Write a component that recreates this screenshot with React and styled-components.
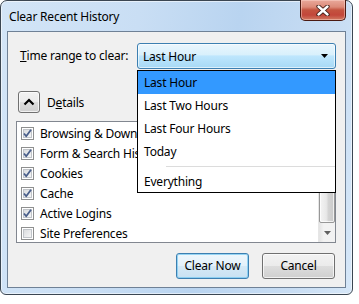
import React from "react";
import styled, { createGlobalStyle } from "styled-components";

const Global = createGlobalStyle`
  html, body { margin: 0; padding: 0; background: #ffffff; }
  body { font-family: "Noto Sans", "Open Sans", sans-serif; font-size: 12px; letter-spacing: -0.2px; color: #000; }
  * { box-sizing: border-box; }
`;

const Window = styled.div`
  width: 353px;
  height: 295px;
  border: 1px solid #3b4652;
  border-radius: 7px 7px 6px 6px;
  background: linear-gradient(100deg, #d3e5f7 0%, #c9def4 35%, #b9d4f0 60%, #c8ddf3 85%, #d6e7f8 100%);
  padding: 0 6px 6px 6px;
  display: flex;
  flex-direction: column;
  box-shadow: inset 0 0 0 1px rgba(255,255,255,0.55);
`;

const TitleBar = styled.div`
  height: 30px;
  display: flex;
  align-items: flex-start;
  justify-content: space-between;
`;

const Title = styled.div`
  margin-top: 8px;
  padding-left: 2px;
  font-size: 12px;
  line-height: 16px;
  color: #000;
`;

const CloseButton = styled.div`
  width: 46px;
  height: 21px;
  margin-top: -1px;
  border: 1px solid #4a1a12;
  border-top: none;
  border-radius: 0 0 5px 5px;
  background: linear-gradient(180deg, #e9a99b 0%, #dc8a79 35%, #c4533f 50%, #c2463a 75%, #d17a62 100%);
  display: flex;
  align-items: center;
  justify-content: center;
  box-shadow: inset 0 0 0 1px rgba(255,220,210,0.45);
`;

const Client = styled.div`
  flex: 1;
  border: 1px solid #6f8196;
  background: #f0f0f0;
  padding: 11px 9px 8px 8px;
  display: flex;
  flex-direction: column;
`;

const RangeRow = styled.div`
  display: flex;
  align-items: center;
  height: 26px;
`;

const Label = styled.div`
  flex: 1;
  padding-left: 4px;
  line-height: 16px;
`;

const SelectWrap = styled.div`
  position: relative;
  width: 199px;
  height: 26px;
`;

const SelectBox = styled.div`
  height: 100%;
  border: 1px solid #3c7fb1;
  border-radius: 3px;
  background: linear-gradient(180deg, #eaf6fd 0%, #d9f0fc 45%, #bee6fd 50%, #a7d9f5 100%);
  display: flex;
  align-items: center;
  justify-content: space-between;
  padding: 0 7px 0 5px;
  box-shadow: inset 0 0 0 1px rgba(255,255,255,0.6);
`;

const Popup = styled.div`
  position: absolute;
  left: 0;
  right: 0;
  top: calc(100% + 1px);
  background: #fff;
  border: 1px solid #000;
  z-index: 5;
  display: flex;
  flex-direction: column;
`;

const Option = styled.div`
  height: ${p => (p.$last ? 22 : 23)}px;
  display: flex;
  align-items: center;
  padding-left: 6px;
  background: ${p => (p.$active ? "#3399ff" : "transparent")};
  color: #000;
`;

const Separator = styled.div`
  height: 7px;
  display: flex;
  align-items: center;
  padding-left: 28px;
  &::after {
    content: "";
    flex: 1;
    height: 1px;
    background: #dcdcdc;
  }
`;

const DetailsRow = styled.div`
  margin-top: 22px;
  height: 22px;
  display: flex;
  align-items: center;
  gap: 7px;
  padding-left: 2px;
`;

const SquareButton = styled.div`
  width: 22px;
  height: 22px;
  border: 1px solid #707070;
  border-radius: 3px;
  background: linear-gradient(180deg, #f2f2f2 0%, #ebebeb 50%, #dddddd 51%, #cfcfcf 100%);
  box-shadow: inset 0 0 0 1px rgba(255,255,255,0.7);
  display: flex;
  align-items: center;
  justify-content: center;
`;

const ListBox = styled.div`
  margin-top: 8px;
  height: 122px;
  width: 320px;
  border: 1px solid #828790;
  background: #fff;
  display: flex;
  overflow: hidden;
`;

const Items = styled.div`
  flex: 1;
  padding-top: 1px;
  display: flex;
  flex-direction: column;
  overflow: hidden;
`;

const Item = styled.div`
  height: 20px;
  flex-shrink: 0;
  display: flex;
  align-items: center;
  padding-left: 4px;
  gap: 6px;
  white-space: nowrap;
`;

const ScrollBar = styled.div`
  width: 17px;
  display: flex;
  flex-direction: column;
  background: linear-gradient(90deg, #e3e3e3 0%, #f2f2f2 30%, #f2f2f2 100%);
  border-left: 1px solid #e6e6e6;
`;

const ScrollArrow = styled.div`
  height: 18px;
  display: flex;
  align-items: center;
  justify-content: center;
`;

const Track = styled.div`
  flex: 1;
  padding: 0 0 1px 0;
  display: flex;
`;

const Thumb = styled.div`
  flex: 1;
  border: 1px solid #979797;
  border-radius: 2px;
  background: linear-gradient(90deg, #f4f4f4 0%, #e8e8e8 45%, #d4d4d4 60%, #c9c9c9 100%);
  box-shadow: inset 0 0 0 1px rgba(255,255,255,0.7);
`;

const ButtonRow = styled.div`
  margin-top: 10px;
  display: flex;
  justify-content: flex-end;
  gap: 13px;
  padding-right: 1px;
`;

const PushButton = styled.div`
  width: 73px;
  height: 26px;
  border: 1px solid ${p => (p.$default ? "#3c7fb1" : "#707070")};
  border-radius: 3px;
  background: ${p =>
    p.$default
      ? "linear-gradient(180deg, #eef7fc 0%, #e3f1fa 50%, #d5e9f6 51%, #c9e1f2 100%)"
      : "linear-gradient(180deg, #f2f2f2 0%, #ebebeb 50%, #dddddd 51%, #cfcfcf 100%)"};
  box-shadow: inset 0 0 0 1px ${p => (p.$default ? "rgba(120,200,240,0.75)" : "rgba(255,255,255,0.7)")};
  display: flex;
  align-items: center;
  justify-content: center;
  line-height: 16px;
`;

const Check = ({ checked }) => (
  <svg width="13" height="13" viewBox="0 0 13 13" style={{ flexShrink: 0 }}>
    <defs>
      <linearGradient id="cbg" x1="0" y1="0" x2="1" y2="1">
        <stop offset="0" stopColor="#d8dadd" />
        <stop offset="1" stopColor="#f7f7f7" />
      </linearGradient>
    </defs>
    <rect x="0.5" y="0.5" width="12" height="12" fill="#fff" stroke="#8e8f8f" />
    <rect x="2.5" y="2.5" width="8" height="8" fill="url(#cbg)" stroke="#c0c4c9" />
    {checked && (
      <path d="M3 6.5 L5.2 9.2 L10 2.8" fill="none" stroke="#4a5f8a" strokeWidth="1.8" strokeLinejoin="round" />
    )}
  </svg>
);

const items = [
  ["Browsing & Download History", true],
  ["Form & Search History", true],
  ["Cookies", true],
  ["Cache", true],
  ["Active Logins", true],
  ["Site Preferences", false],
];

export default function App() {
  return (
    <>
      <Global />
      <Window>
        <TitleBar>
          <Title>Clear Recent History</Title>
          <CloseButton>
            <svg width="14" height="11" viewBox="0 0 14 11">
              <path d="M2.5 1.5 L11.5 9.5 M11.5 1.5 L2.5 9.5" stroke="#3a1a14" strokeWidth="4.2" strokeLinecap="round" />
              <path d="M2.5 1.5 L11.5 9.5 M11.5 1.5 L2.5 9.5" stroke="#ffffff" strokeWidth="2.4" strokeLinecap="round" />
            </svg>
          </CloseButton>
        </TitleBar>
        <Client>
          <RangeRow>
            <Label>
              <u>T</u>ime range to clear:
            </Label>
            <SelectWrap>
              <SelectBox>
                <span>Last Hour</span>
                <svg width="7" height="4" viewBox="0 0 7 4">
                  <path d="M0 0 H7 L3.5 4 Z" fill="#000" />
                </svg>
              </SelectBox>
              <Popup>
                <Option $active>Last Hour</Option>
                <Option>Last Two Hours</Option>
                <Option>Last Four Hours</Option>
                <Option>Today</Option>
                <Separator />
                <Option $last>Everything</Option>
              </Popup>
            </SelectWrap>
          </RangeRow>
          <DetailsRow>
            <SquareButton>
              <svg width="12" height="8" viewBox="0 0 12 8">
                <path d="M1.5 6.5 L6 2 L10.5 6.5" fill="none" stroke="#000" strokeWidth="2.2" />
              </svg>
            </SquareButton>
            <span>
              D<u>e</u>tails
            </span>
          </DetailsRow>
          <ListBox>
            <Items>
              {items.map(([label, checked]) => (
                <Item key={label}>
                  <Check checked={checked} />
                  <span>{label}</span>
                </Item>
              ))}
            </Items>
            <ScrollBar>
              <ScrollArrow>
                <svg width="7" height="4" viewBox="0 0 7 4">
                  <path d="M0 4 H7 L3.5 0 Z" fill="#606060" />
                </svg>
              </ScrollArrow>
              <Track>
                <Thumb />
              </Track>
              <ScrollArrow>
                <svg width="7" height="4" viewBox="0 0 7 4">
                  <path d="M0 0 H7 L3.5 4 Z" fill="#606060" />
                </svg>
              </ScrollArrow>
            </ScrollBar>
          </ListBox>
          <ButtonRow>
            <PushButton $default>Clear Now</PushButton>
            <PushButton>Cancel</PushButton>
          </ButtonRow>
        </Client>
      </Window>
    </>
  );
}
